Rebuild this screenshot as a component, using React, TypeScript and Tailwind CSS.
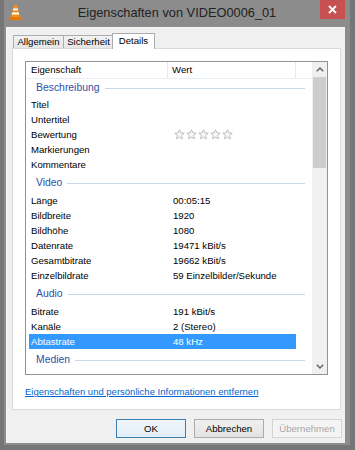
import React from "react";

const Star = () => (
  <svg width="11" height="11" viewBox="0 0 11 11">
    <path
      d="M5.5 0.8 L6.9 3.9 L10.2 4.2 L7.7 6.4 L8.4 9.8 L5.5 8.1 L2.6 9.8 L3.3 6.4 L0.8 4.2 L4.1 3.9 Z"
      fill="#fafafa"
      stroke="#b4b4b4"
      strokeWidth="0.9"
      strokeLinejoin="round"
    />
  </svg>
);

type Row = { l: string; v?: string; stars?: boolean; sel?: boolean };
type Group = { title: string; rows: Row[] };

const groups: Group[] = [
  {
    title: "Beschreibung",
    rows: [
      { l: "Titel" },
      { l: "Untertitel" },
      { l: "Bewertung", stars: true },
      { l: "Markierungen" },
      { l: "Kommentare" },
    ],
  },
  {
    title: "Video",
    rows: [
      { l: "Länge", v: "00:05:15" },
      { l: "Bildbreite", v: "1920" },
      { l: "Bildhöhe", v: "1080" },
      { l: "Datenrate", v: "19471 kBit/s" },
      { l: "Gesamtbitrate", v: "19662 kBit/s" },
      { l: "Einzelbildrate", v: "59 Einzelbilder/Sekunde" },
    ],
  },
  {
    title: "Audio",
    rows: [
      { l: "Bitrate", v: "191 kBit/s" },
      { l: "Kanäle", v: "2 (Stereo)" },
      { l: "Abtastrate", v: "48 kHz", sel: true },
    ],
  },
  { title: "Medien", rows: [] },
];

export default function App() {
  return (
    <div className="w-[355px] h-[450px] bg-[#8c8c8c] border-l-[4px] border-r-[5px] border-b-[5px] border-[#767676] flex flex-col relative font-['Liberation_Sans',Arial,sans-serif] overflow-hidden">
      {/* Title bar */}
      <div className="h-[27px] flex items-center justify-center pb-[1px] shrink-0">
        <span className="text-[12.8px] text-[#222222] leading-none">Eigenschaften von VIDEO0006_01</span>
      </div>
      {/* VLC icon */}
      <svg className="absolute left-[5px] top-[5px]" width="13" height="15" viewBox="0 0 13 15">
        <rect x="0" y="12" width="13" height="3" rx="0.8" fill="#e57a00" />
        <polygon points="5.2,0 7.8,0 11,12 2,12" fill="#f5901e" />
        <polygon points="4.3,3.4 8.7,3.4 9.2,5.3 3.8,5.3" fill="#ffffff" />
        <polygon points="3.2,7.6 9.8,7.6 10.3,9.6 2.7,9.6" fill="#ffffff" />
      </svg>
      {/* Close button */}
      <div className="absolute top-0 right-[5px] w-[25px] h-[19px] bg-[#c75050] flex items-center justify-center">
        <svg width="9" height="9" viewBox="0 0 9 9">
          <path d="M1 1 L8 8 M8 1 L1 8" stroke="#ffffff" strokeWidth="1.8" />
        </svg>
      </div>

      {/* Client area */}
      <div className="flex-1 ml-[2px] mr-[5px] mb-[2px] bg-[#f0f0f0] border-l border-t border-[#f7f7f7] flex flex-col pt-[5px] text-[9.6px] text-black">
        {/* Tabs */}
        <div className="h-[15px] flex items-end pl-[6px] relative z-10">
          <div className="w-[51px] h-[13px] border border-b-0 border-[#acacac] bg-gradient-to-b from-[#f2f2f2] to-[#e6e6e6] flex items-center justify-center leading-none">
            Allgemein
          </div>
          <div className="w-[50px] h-[13px] border-t border-r border-[#acacac] bg-gradient-to-b from-[#f2f2f2] to-[#e6e6e6] flex items-center justify-center leading-none">
            Sicherheit
          </div>
          <div className="w-[43px] h-[16px] -ml-[2px] -mb-px border border-b-0 border-[#acacac] bg-white flex items-center justify-center pb-[2px] leading-none">
            Details
          </div>
        </div>

        {/* Panel */}
        <div className="ml-[5px] mr-[4px] h-[362px] border border-[#d9d9d9] bg-white pt-[12px] pl-[12px] flex flex-col">
          {/* List box */}
          <div className="w-[303px] h-[314px] border border-[#8e9299] flex overflow-hidden">
            <div className="w-[286px] flex flex-col overflow-hidden">
              {/* Header */}
              <div className="h-[17px] shrink-0 flex border-b border-[#e8eef6]">
                <div className="w-[142px] pl-[5px] flex items-center border-r border-[#e2eaf4]">Eigenschaft</div>
                <div className="w-[128px] pl-[4px] flex items-center border-r border-[#e2eaf4]">Wert</div>
                <div className="flex-1" />
              </div>
              {groups.map((g, gi) => (
                <div key={g.title} className="flex flex-col shrink-0">
                  <div className={gi === 0 ? "h-[18px] flex items-center pl-[10px] pr-[7px]" : "h-[21px] pt-[2px] flex items-center pl-[10px] pr-[7px]"}>
                    <span className="text-[10.4px] text-[#2d4fa6] leading-none">{g.title}</span>
                    <div className="flex-1 h-px bg-[#c8d6ee] ml-[5px]" />
                  </div>
                  {g.rows.map((r) => (
                    <div
                      key={r.l}
                      className={
                        r.sel
                          ? "h-[15px] ml-[3px] w-[267px] flex items-center bg-[#3399ff] text-white"
                          : "h-[15px] ml-[3px] w-[267px] flex items-center"
                      }
                    >
                      <div className="w-[139px] pl-[2px] leading-none">{r.l}</div>
                      {r.stars ? (
                        <div className="flex gap-[1px] pl-[6px]">
                          <Star />
                          <Star />
                          <Star />
                          <Star />
                          <Star />
                        </div>
                      ) : (
                        <div className="pl-[5px] leading-none">{r.v}</div>
                      )}
                    </div>
                  ))}
                </div>
              ))}
            </div>
            {/* Scrollbar */}
            <div className="w-[15px] bg-[#f0f0f0] flex flex-col">
              <div className="h-[15px] flex items-center justify-center">
                <svg width="8" height="5" viewBox="0 0 8 5">
                  <path d="M0.8 4.2 L4 1 L7.2 4.2" fill="none" stroke="#606060" strokeWidth="1.4" />
                </svg>
              </div>
              <div className="h-[91px] mx-[1px] bg-[#cdcdcd]" />
              <div className="flex-1" />
              <div className="h-[15px] flex items-center justify-center">
                <svg width="8" height="5" viewBox="0 0 8 5">
                  <path d="M0.8 0.8 L4 4 L7.2 0.8" fill="none" stroke="#606060" strokeWidth="1.4" />
                </svg>
              </div>
            </div>
          </div>
          {/* Link */}
          <div className="mt-[11px] h-[12px] flex items-center">
            <span className="text-[9.5px] text-[#0066cc] underline leading-none">
              Eigenschaften und persönliche Informationen entfernen
            </span>
          </div>
        </div>

        {/* Buttons */}
        <div className="mt-[9px] flex justify-end gap-[8px] pr-[3px]">
          <div className="w-[70px] h-[19px] border border-[#3c7fb1] bg-gradient-to-b from-[#f0f6fc] to-[#e2eef9] flex items-center justify-center leading-none">
            OK
          </div>
          <div className="w-[70px] h-[19px] border border-[#acacac] bg-gradient-to-b from-[#f0f0f0] to-[#e3e3e3] flex items-center justify-center leading-none">
            Abbrechen
          </div>
          <div className="w-[70px] h-[19px] border border-[#d5d5d5] bg-[#f4f4f4] text-[#a8a8a8] flex items-center justify-center leading-none">
            Übernehmen
          </div>
        </div>
      </div>
    </div>
  );
}
